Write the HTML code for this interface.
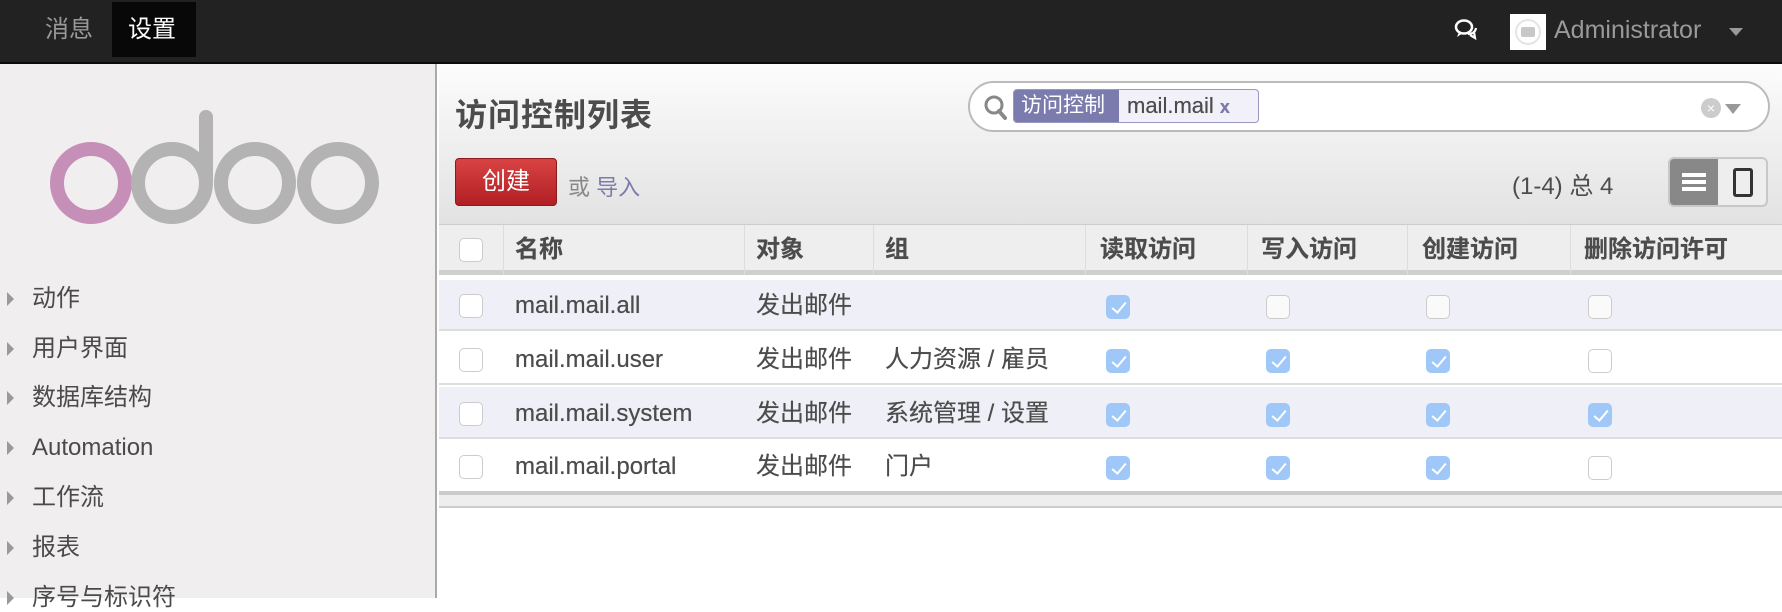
<!DOCTYPE html>
<html><head><meta charset="utf-8"><style>
*{box-sizing:border-box;margin:0;padding:0}
body{width:1782px;height:598px;overflow:hidden;font-family:"Liberation Sans","Noto Sans CJK SC",sans-serif;background:#fff;position:relative;color:#4c4c4c}
.top{position:absolute;left:0;top:0;width:1782px;height:64px;background:#222;border-bottom:2px solid #0a0a0a}
.top .m{position:absolute;top:2px;height:56px;line-height:56px;font-size:24px;color:#999;padding:0 16px}
.side{position:absolute;left:0;top:64px;width:437px;height:534px;background:#f0eeef;border-right:2px solid #aaa}
.mi{position:absolute;left:32px;font-size:24px;color:#4a4a4a;line-height:28px}
.mi:before{content:"";position:absolute;left:-25px;top:7px;border-left:7px solid #999;border-top:7px solid transparent;border-bottom:7px solid transparent}
.main{position:absolute;left:439px;top:64px;width:1343px;height:534px}
.hdr{position:absolute;left:0;top:0;width:1343px;height:161px;background:linear-gradient(#fcfcfc,#e2e2e2);border-bottom:1px solid #ccc}
.ab{position:absolute;top:161px;left:0;width:1343px}
.cell{position:absolute;font-size:24px;line-height:28px;text-shadow:0 0 0.4px #4c4c4c}
.cb{position:absolute;width:24px;height:24px;border-radius:5px;border:1px solid #ccc;background:#fafafa}
.ck{background:#9fc8f8;border-color:#9fc8f8}
.ck:after{content:"";position:absolute;left:8px;top:3px;width:6px;height:12px;border-right:2.5px solid #fff;border-bottom:2.5px solid #fff;transform:rotate(40deg)}
</style></head><body>
<div class="top">
 <div class="m" style="left:29px">消息</div>
 <div class="m" style="left:112px;width:84px;background:#080808;color:#fff;height:55px">设置</div>
 <svg style="position:absolute;left:1453px;top:17px" width="26" height="24" viewBox="0 0 26 24"><ellipse cx="11" cy="10" rx="8" ry="6.5" fill="none" stroke="#fff" stroke-width="2.5"/><path d="M6 15 L4 20 L10 16" fill="#fff"/><path d="M15 17 Q22 17 23 11 M17 18 L22 21 L21 15" fill="none" stroke="#fff" stroke-width="2.2"/></svg>
 <div style="position:absolute;left:1510px;top:14px;width:36px;height:36px;background:#fff"><div style="position:absolute;left:5px;top:5px;width:26px;height:26px;border-radius:50%;border:2px solid #e4e4e4"></div><div style="position:absolute;left:11px;top:13px;width:14px;height:10px;background:#c8c8c8;border-radius:2px"></div></div>
 <div style="position:absolute;left:1554px;top:12px;font-size:25px;color:#999;line-height:36px">Administrator</div>
 <div style="position:absolute;left:1729px;top:28px;border-top:8px solid #999;border-left:7px solid transparent;border-right:7px solid transparent"></div>
</div>
<div class="side">
 <svg style="position:absolute;left:48px;top:44px" width="336" height="120" viewBox="0 0 336 120">
  <circle cx="43" cy="75" r="34" fill="none" stroke="#c68fb8" stroke-width="14"/>
  <circle cx="124" cy="75" r="34" fill="none" stroke="#b3b3b3" stroke-width="14"/>
  <rect x="151" y="2" width="14" height="78" rx="7" fill="#b3b3b3"/>
  <circle cx="207" cy="75" r="34" fill="none" stroke="#b3b3b3" stroke-width="14"/>
  <circle cx="290" cy="75" r="34" fill="none" stroke="#b3b3b3" stroke-width="14"/>
 </svg>
 <div class="mi" style="top:221px">动作</div>
 <div class="mi" style="top:271px">用户界面</div>
 <div class="mi" style="top:320px">数据库结构</div>
 <div class="mi" style="top:370px">Automation</div>
 <div class="mi" style="top:420px">工作流</div>
 <div class="mi" style="top:470px">报表</div>
 <div class="mi" style="top:520px">序号与标识符</div>
</div>
<div class="main">
 <div class="hdr">
  <div style="position:absolute;left:16px;top:26px;font-size:32px;color:#4c4c4c;font-weight:bold;letter-spacing:1px">访问控制列表</div>
  <div style="position:absolute;left:529px;top:17px;width:802px;height:51px;border:2px solid #bbb;border-radius:26px;background:#fff"></div>
  <svg style="position:absolute;left:544px;top:30px" width="26" height="28" viewBox="0 0 26 28"><circle cx="11" cy="11" r="8" fill="none" stroke="#888" stroke-width="3"/><path d="M16 17 L22 24" stroke="#888" stroke-width="4" stroke-linecap="round"/></svg>
  <div style="position:absolute;left:574px;top:25px;width:246px;height:34px;border:1px solid #9a98c0;border-radius:4px;background:#f2f0f9"></div>
  <div style="position:absolute;left:575px;top:26px;width:105px;height:32px;background:#7c7bad;color:#fff;font-size:21px;line-height:32px;padding-left:7px;border-radius:3px 0 0 3px">访问控制</div>
  <div style="position:absolute;left:688px;top:26px;font-size:22px;line-height:32px;color:#4c4c4c;text-shadow:0 0 0.4px #4c4c4c">mail.mail <span style="color:#7c7bad;font-weight:bold;font-size:18px">x</span></div>
  <div style="position:absolute;left:1262px;top:34px;width:20px;height:20px;border-radius:50%;background:#ccc;color:#fff;font-size:14px;line-height:20px;text-align:center">×</div>
  <div style="position:absolute;left:1286px;top:40px;border-top:10px solid #999;border-left:8px solid transparent;border-right:8px solid transparent"></div>
  <div style="position:absolute;left:16px;top:94px;width:102px;height:48px;border:1px solid #8b1a1a;border-radius:4px;background:linear-gradient(#d94343,#b11f24);color:#fff;font-size:24px;line-height:46px;text-align:center">创建</div>
  <div style="position:absolute;left:129px;top:106px;font-size:22px;color:#888">或 <span style="color:#7c7bad">导入</span></div>
  <div style="position:absolute;left:1073px;top:102px;font-size:24px;color:#4c4c4c">(1-4) 总 4</div>
  <div style="position:absolute;left:1229px;top:93px;width:100px;height:50px;border:2px solid #c8c8c8;border-radius:6px;background:#eee;overflow:hidden">
   <div style="position:absolute;left:0;top:0;width:48px;height:50px;background:#888"></div>
   <div style="position:absolute;left:12px;top:14px;width:24px;height:4px;background:#fff;box-shadow:0 7px 0 #fff,0 14px 0 #fff"></div>
   <div style="position:absolute;left:63px;top:9px;width:20px;height:29px;border:3px solid #333;border-radius:3px"></div>
  </div>
 </div>
 <div class="ab">
  <div style="position:absolute;left:0;top:0;width:1343px;height:50px;background:#eee;border-bottom:5px solid #cfcfcf"></div>
  <div style="position:absolute;left:64px;top:0;width:1px;height:50px;background:#ddd"></div>
  <div style="position:absolute;left:305px;top:0;width:1px;height:50px;background:#ddd"></div>
  <div style="position:absolute;left:434px;top:0;width:1px;height:50px;background:#ddd"></div>
  <div style="position:absolute;left:646px;top:0;width:1px;height:50px;background:#ddd"></div>
  <div style="position:absolute;left:808px;top:0;width:1px;height:50px;background:#ddd"></div>
  <div style="position:absolute;left:968px;top:0;width:1px;height:50px;background:#ddd"></div>
  <div style="position:absolute;left:1131px;top:0;width:1px;height:50px;background:#ddd"></div>
  <div class="cb" style="left:20px;top:13px;background:#fff"></div>
  <div class="cell" style="left:76px;top:11px;font-weight:bold">名称</div>
  <div class="cell" style="left:317px;top:11px;font-weight:bold">对象</div>
  <div class="cell" style="left:446px;top:11px;font-weight:bold">组</div>
  <div class="cell" style="left:661px;top:11px;font-weight:bold">读取访问</div>
  <div class="cell" style="left:822px;top:11px;font-weight:bold">写入访问</div>
  <div class="cell" style="left:983px;top:11px;font-weight:bold">创建访问</div>
  <div class="cell" style="left:1145px;top:11px;font-weight:bold">删除访问许可</div>
 </div>
 <div style="position:absolute;left:0;top:216px;width:1343px;height:51px;background:#eff0f7;border-bottom:2px solid #ddd"></div>
 <div style="position:absolute;left:0;top:269px;width:1343px;height:52px;background:#fff;border-bottom:2px solid #ddd"></div>
 <div style="position:absolute;left:0;top:323px;width:1343px;height:52px;background:#eff0f7;border-bottom:2px solid #ddd"></div>
 <div style="position:absolute;left:0;top:377px;width:1343px;height:50px;background:#fff"></div>
 <div style="position:absolute;left:0;top:427px;width:1343px;height:17px;background:#eee;border-top:4px solid #cbcbcb;border-bottom:2px solid #ccc"></div>

 <div class="cb" style="left:20px;top:230px;background:#fff"></div>
 <div class="cell" style="left:76px;top:228px">mail.mail.all</div>
 <div class="cell" style="left:317px;top:228px">发出邮件</div>
 <div class="cb ck" style="left:667px;top:231px"></div><div class="cb" style="left:827px;top:231px"></div><div class="cb" style="left:987px;top:231px"></div><div class="cb" style="left:1149px;top:231px"></div>

 <div class="cb" style="left:20px;top:284px;background:#fff"></div>
 <div class="cell" style="left:76px;top:282px">mail.mail.user</div>
 <div class="cell" style="left:317px;top:282px">发出邮件</div>
 <div class="cell" style="left:446px;top:282px">人力资源 / 雇员</div>
 <div class="cb ck" style="left:667px;top:285px"></div><div class="cb ck" style="left:827px;top:285px"></div><div class="cb ck" style="left:987px;top:285px"></div><div class="cb" style="left:1149px;top:285px;background:#fff"></div>

 <div class="cb" style="left:20px;top:338px;background:#fff"></div>
 <div class="cell" style="left:76px;top:336px">mail.mail.system</div>
 <div class="cell" style="left:317px;top:336px">发出邮件</div>
 <div class="cell" style="left:446px;top:336px">系统管理 / 设置</div>
 <div class="cb ck" style="left:667px;top:339px"></div><div class="cb ck" style="left:827px;top:339px"></div><div class="cb ck" style="left:987px;top:339px"></div><div class="cb ck" style="left:1149px;top:339px"></div>

 <div class="cb" style="left:20px;top:391px;background:#fff"></div>
 <div class="cell" style="left:76px;top:389px">mail.mail.portal</div>
 <div class="cell" style="left:317px;top:389px">发出邮件</div>
 <div class="cell" style="left:446px;top:389px">门户</div>
 <div class="cb ck" style="left:667px;top:392px"></div><div class="cb ck" style="left:827px;top:392px"></div><div class="cb ck" style="left:987px;top:392px"></div><div class="cb" style="left:1149px;top:392px;background:#fff"></div>
</div>
</body></html>
